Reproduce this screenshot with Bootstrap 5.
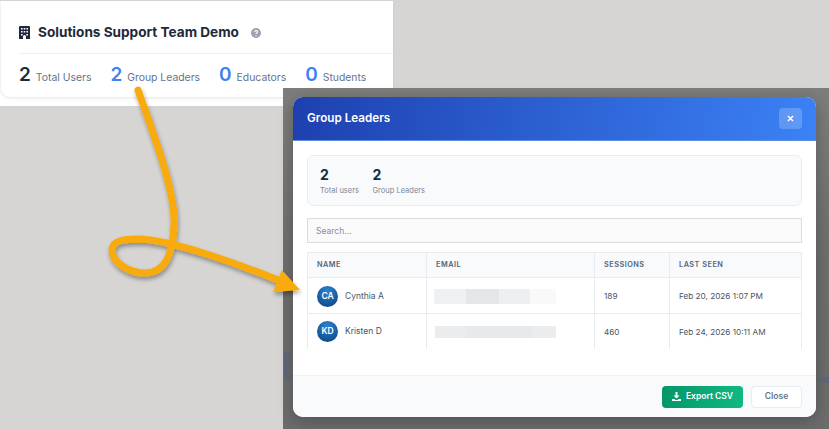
<!DOCTYPE html>
<html lang="en"><head><meta charset="utf-8"><title>Group Leaders</title>
<link href="https://cdn.jsdelivr.net/npm/bootstrap@5.3.0/dist/css/bootstrap.min.css" rel="stylesheet">
<style>
html,body{margin:0;height:429px;overflow:hidden}
body{background:#d6d5d3;font-family:Inter,"Liberation Sans",sans-serif;position:relative}
.shot-a{position:absolute;left:0;top:1px;width:393px;height:105px;background:#fff}
.team-card{height:97px;border-radius:0 0 10px 10px;border-left:1px solid #f1f2f4;border-bottom:1px solid #eceef1;box-shadow:0 1px 3px rgba(0,0,0,.06);padding:0 0 0 18px}
.team-head{height:53px;border-bottom:1px solid #eef0f2;padding-top:11px}
.team-title{font-size:13.6px;font-weight:700;color:#1e293b;margin:0 12px 0 8px;line-height:1}
.stat-row{padding-top:9px;gap:19px}
.stat-num{font-size:19px;font-weight:600;line-height:24px;color:#1e293b}
.stat-num.blue{color:#3b82f6}
.stat-lab{font-size:10.4px;color:#64748b;margin-left:5px}
.shot-b{position:absolute;left:283px;top:88px;width:546px;height:341px;background:linear-gradient(90deg,rgba(60,90,150,.35),transparent) 1px 264px/9px 28px no-repeat,linear-gradient(90deg,transparent,rgba(60,90,150,.35)) 533px 289px/13px 6px no-repeat,linear-gradient(180deg,#7d7d7c,#6e6e6e 50%,#6c6c6c);padding:9px 13px 12px 10px}
.gl-modal{height:320px;border-radius:10px;overflow:hidden;background:#fff;display:flex;flex-direction:column;box-shadow:0 4px 16px rgba(0,0,0,.25)}
.gl-head{flex:none;background:linear-gradient(100deg,#1e40af,#3b82f6);padding:0 14px;box-sizing:content-box;height:43px;border-bottom:1px solid #5d8de0}
.gl-title{font-size:11.7px;font-weight:600;color:#fff;margin:0}
.gl-x{width:23px;height:21px;border:0;background:rgba(255,255,255,.2);border-radius:4px;color:#fff;padding:0;display:flex;align-items:center;justify-content:center}
.gl-body{flex:1;padding:14px 14px 0;min-height:0;overflow:hidden}
.sum-box{height:51px;background:#f8fafc;border:1px solid #e9edf2;border-radius:6px;padding:10px 12px;gap:13.5px}
.sum-num{font-size:14px;font-weight:700;color:#0f2f4f;line-height:18px}
.sum-lab{font-size:7.5px;color:#7c8797;line-height:13px}
.gl-search{display:block;width:100%;height:25px;margin-top:12px;border:1px solid #dcdcdc;background:#fafafa;font-size:8.5px;padding:0 8px;color:#555;border-radius:0;outline:0}
.gl-search::placeholder{color:#8a8f96}
.gl-table{width:100%;margin-top:9px;border-collapse:collapse;table-layout:fixed;font-size:8.2px;color:#475569;border:1px solid #e8ebef;border-bottom:0}
.gl-table th{height:25px;background:#f8fafc;font-size:7.3px;font-weight:600;letter-spacing:.5px;color:#56657a;padding:0 9px;border:1px solid #e8ebef;border-top:0;text-transform:uppercase}
.gl-table td{height:36px;padding:1px 9px 0;border:1px solid #e8ebef;vertical-align:middle}
.gl-table tr:last-child td{border-bottom:0;height:35px}
.ava{width:21px;height:21px;border-radius:50%;background:radial-gradient(circle at 50% 25%,#2c82d0,#0f4f8d 80%);color:#fff;font-size:8.5px;font-weight:600;flex:none}
.gl-name{color:#475569;margin-left:7px;font-size:8.5px}
.mask{width:122px;height:15px;background:linear-gradient(90deg,#eef0f2 0 26%,#e5e6e8 26% 53%,#eeeff1 53% 79%,#f9f9fa 79%);margin-left:-2px}
.mask.alt{width:121px;height:12px;background:linear-gradient(90deg,#ebecee 0 26%,#e8e9eb 26% 80%,#ebecee 80%);margin-left:-1px}
.gl-foot{flex:none;background:#f8fafc;border-top:1px solid #f0f2f5;padding:0 14px;gap:8px;box-sizing:border-box;height:42px}
.btn-exp,.btn-cl{height:22px;border-radius:4px;font-size:8.5px;font-weight:600;padding:0;display:flex;align-items:center;justify-content:center}
.btn-exp{width:81px;border:0;color:#fff;background:linear-gradient(90deg,#059669,#10b981);gap:5px}
.btn-cl{width:51px;background:#fff;border:1px solid #e8ebef;color:#64748b}
.arrow{position:absolute;left:0;top:0;pointer-events:none}
</style></head><body>
<section class="shot-a">
 <div class="team-card">
  <div class="team-head d-flex align-items-center">
   <svg width="11" height="13" viewBox="0 0 11 13" aria-hidden="true"><path fill="#1e293b" fill-rule="evenodd" d="M1 0h9a1 1 0 0 1 1 1v12H7v-2.500a1.500 1.500 0 0 0-3 0V13H0V1a1 1 0 0 1 1-1zM2 2v1.600h1.600V2zm2.700 0v1.600h1.600V2zm2.700 0v1.600H9V2zM2 5v1.600h1.600V5zm2.700 0v1.600h1.600V5zm2.700 0v1.600H9V5zM2 8v1.600h1.600V8zm5.400 0v1.600H9V8z"/></svg>
   <h1 class="team-title">Solutions Support Team Demo</h1>
   <svg width="10" height="10" viewBox="0 0 10 10" aria-hidden="true"><circle cx="5" cy="5" r="5" fill="#9ca3af"/><path d="M3.600 3.900a1.500 1.300 0 1 1 2.200 1.200c-.6.300-.8.500-.8 1" fill="none" stroke="#fff" stroke-width="1.100"/><circle cx="5" cy="7.600" r=".7" fill="#fff"/></svg>
  </div>
  <div class="stat-row d-flex align-items-baseline">
   <div><span class="stat-num">2</span><span class="stat-lab">Total Users</span></div>
   <div><span class="stat-num blue">2</span><span class="stat-lab">Group Leaders</span></div>
   <div><span class="stat-num blue">0</span><span class="stat-lab">Educators</span></div>
   <div><span class="stat-num blue">0</span><span class="stat-lab">Students</span></div>
  </div>
 </div>
</section>
<section class="shot-b">
 <div class="gl-modal">
  <div class="gl-head d-flex align-items-center justify-content-between">
   <h2 class="gl-title">Group Leaders</h2>
   <button class="gl-x" aria-label="Close"><svg width="7" height="7" viewBox="0 0 7 7"><path d="M1 1l5 5M6 1L1 6" stroke="#fff" stroke-width="1.500"/></svg></button>
  </div>
  <div class="gl-body">
   <div class="sum-box d-flex">
    <div style="width:39px"><div class="sum-num">2</div><div class="sum-lab">Total users</div></div>
    <div><div class="sum-num">2</div><div class="sum-lab">Group Leaders</div></div>
   </div>
   <input class="gl-search" placeholder="Search...">
   <table class="gl-table">
    <colgroup><col style="width:119px"><col style="width:168px"><col style="width:75px"><col></colgroup>
    <thead><tr><th>Name</th><th>Email</th><th>Sessions</th><th>Last Seen</th></tr></thead>
    <tbody>
     <tr><td><div class="d-flex align-items-center"><span class="ava d-flex align-items-center justify-content-center">CA</span><span class="gl-name">Cynthia A</span></div></td><td><div class="mask"></div></td><td>189</td><td>Feb 20, 2026 1:07 PM</td></tr>
     <tr><td><div class="d-flex align-items-center"><span class="ava d-flex align-items-center justify-content-center">KD</span><span class="gl-name">Kristen D</span></div></td><td><div class="mask alt"></div></td><td>460</td><td>Feb 24, 2026 10:11 AM</td></tr>
    </tbody>
   </table>
  </div>
  <div class="gl-foot d-flex align-items-center justify-content-end">
   <button class="btn-exp"><svg width="9" height="9" viewBox="0 0 9 9" aria-hidden="true"><path fill="#fff" d="M3.500 0h2v3.500H7.500L4.500 6.500 1.500 3.500h2zM0 7h2.500l1 1h2l1-1H9v2H0z"/></svg>Export CSV</button>
   <button class="btn-cl">Close</button>
  </div>
 </div>
</section>
<svg class="arrow" width="829" height="429" viewBox="0 0 829 429" aria-hidden="true">
 <defs><filter id="sh" x="-20%" y="-20%" width="140%" height="140%"><feDropShadow dx="1" dy="3" stdDeviation="2" flood-color="#000" flood-opacity=".35"/></filter></defs>
 <g filter="url(#sh)">
  <path d="M138 90C150 125 176 190 174 225C173 255 165 273 145 273C128 273 112 262 112 250C112 240 125 239 140 239C170 240 235 262 285 283" fill="none" stroke="#f9ab07" stroke-width="7" stroke-linecap="round"/>
  <path d="M282 270L300 290L273 292Z" fill="#f9ab07"/>
 </g>
</svg>
</body></html>
